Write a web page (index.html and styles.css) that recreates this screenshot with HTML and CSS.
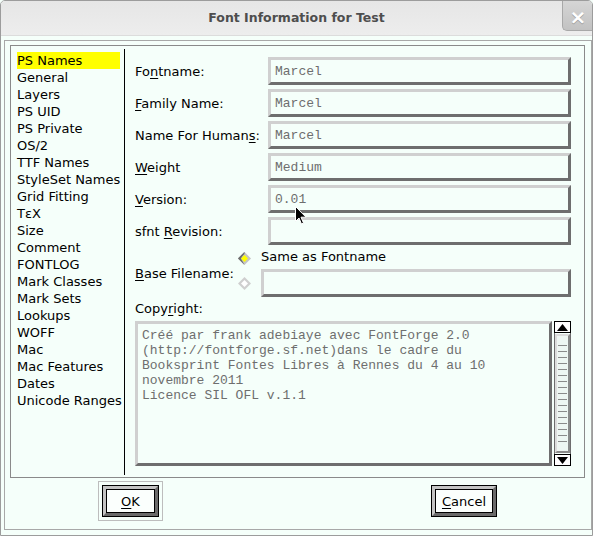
FILE: index.html
```html
<!DOCTYPE html>
<html>
<head>
<meta charset="utf-8">
<link rel="stylesheet" href="styles.css">
</head>
<body>
<div class="window">
  <div class="titlebar">
    <div class="tb-spacer"></div>
    <div class="title">Font Information for Test</div>
    <div class="close">×</div>
  </div>
  <div class="content">
    <div class="frame">
      <div class="group">
        <ul class="list">
          <li class="sel">PS Names</li>
          <li>General</li>
          <li>Layers</li>
          <li>PS UID</li>
          <li>PS Private</li>
          <li>OS/2</li>
          <li>TTF Names</li>
          <li>StyleSet Names</li>
          <li>Grid Fitting</li>
          <li>TεX</li>
          <li>Size</li>
          <li>Comment</li>
          <li>FONTLOG</li>
          <li>Mark Classes</li>
          <li>Mark Sets</li>
          <li>Lookups</li>
          <li>WOFF</li>
          <li>Mac</li>
          <li>Mac Features</li>
          <li>Dates</li>
          <li>Unicode Ranges</li>
        </ul>
        <div class="sep"></div>
        <div class="form">
          <div class="row"><span class="label">Fo<u>n</u>tname:</span><div class="field">Marcel</div></div>
          <div class="row"><span class="label"><u>F</u>amily Name:</span><div class="field">Marcel</div></div>
          <div class="row"><span class="label">Name For Human<u>s</u>:</span><div class="field">Marcel</div></div>
          <div class="row"><span class="label"><u>W</u>eight</span><div class="field">Medium</div></div>
          <div class="row"><span class="label"><u>V</u>ersion:</span><div class="field">0.01</div></div>
          <div class="row"><span class="label">sfnt <u>R</u>evision:</span><div class="field"></div></div>
          <div class="base">
            <span class="base-label"><u>B</u>ase Filename:</span>
            <svg class="diamond d1" width="13" height="13" viewBox="0 0 13 13"><polygon points="6.5,0 13,6.5 6.5,13 0,6.5" fill="#c4c4c4"/><polygon points="6.5,0 0,6.5 6.5,13 3,6.5" fill="#6f6f6f"/><polygon points="6.5,0 0,6.5 2,6.5 6.5,2" fill="#6f6f6f"/><polygon points="6.5,3 10,6.5 6.5,10 3,6.5" fill="#ffff00"/></svg>
            <span class="radio-text">Same as Fontname</span>
            <svg class="diamond d2" width="13" height="13" viewBox="0 0 13 13"><polygon points="6.5,0 13,6.5 6.5,13 0,6.5" fill="#cfcfcf"/><polygon points="6.5,3 10,6.5 6.5,10 3,6.5" fill="#ffffff"/></svg>
            <div class="field base-field"></div>
          </div>
          <div class="copy-label">Copy<u>r</u>ight:</div>
          <div class="copy-row">
            <div class="textarea">Créé par frank adebiaye avec FontForge 2.0
(http://fontforge.sf.net)dans le cadre du
Booksprint Fontes Libres à Rennes du 4 au 10
novembre 2011
Licence SIL OFL v.1.1</div>
            <div class="scrollbar">
              <div class="arrow"><svg width="11" height="7" viewBox="0 0 11 7"><polygon points="5.5,0 11,7 0,7" fill="#000"/></svg></div>
              <div class="track"><div class="thumb"><div class="ridges"></div></div></div>
              <div class="arrow"><svg width="11" height="7" viewBox="0 0 11 7"><polygon points="0,0 11,0 5.5,7" fill="#000"/></svg></div>
            </div>
          </div>
        </div>
      </div>
      <div class="buttons">
        <div class="ring"><div class="btn ok"><div class="face"><div class="btn-label"><u>O</u>K</div></div></div></div>
        <div class="btn cancel"><div class="face"><div class="btn-label"><u>C</u>ancel</div></div></div>
      </div>
    </div>
  </div>
  <svg class="cursor" width="12" height="19" viewBox="0 0 12 19"><path d="M0.5,0.5 L0.5,15.5 L4,12 L6.5,18 L8.5,17 L6,11.2 L11,11.2 Z" fill="#000" stroke="#fff" stroke-width="1"/></svg>
</div>
</body>
</html>
```
FILE: styles.css
```css
* { box-sizing: border-box; }
html, body { margin: 0; padding: 0; background: #f5fffa; }
body { font-family: "DejaVu Sans", sans-serif; font-size: 13px; color: #000; }
u { text-decoration: underline; text-underline-offset: 2px; }

.window {
  position: relative;
  width: 593px;
  height: 536px;
  border: 1px solid #9c9c9c;
  border-radius: 5px 5px 0 0;
  overflow: hidden;
  display: flex;
  flex-direction: column;
  background: #f5fffa;
}

.titlebar {
  height: 35px;
  flex: none;
  display: grid;
  grid-template-columns: 30px 1fr 30px;
  background: linear-gradient(#e6e6e6, #ededed);
  border-bottom: 1px solid #dcdcdc;
}
.title {
  text-align: center;
  font-family: "DejaVu Sans", sans-serif;
  font-weight: bold;
  font-size: 12.5px;
  color: #4e4e4e;
  line-height: 34px;
}
.close {
  height: 31px;
  margin-top: -1px;
  margin-right: -1px;
  background: linear-gradient(#d6d6d6, #c2c2c2);
  border-left: 1px solid #a8a8a8;
  border-bottom: 1px solid #a8a8a8;
  border-bottom-left-radius: 5px;
  color: #fff;
  font-size: 20px;
  font-weight: bold;
  text-align: center;
  line-height: 34px;
  text-shadow: 0 1px 0 #9a9a9a;
}

.content {
  flex: 1;
  padding: 4px 0 5px 3px;
}
.frame {
  height: 100%;
  border: 1px solid #a8a8a8;
  display: flex;
  flex-direction: column;
}
.group {
  margin: 4px 6px 0 5px;
  height: 433px;
  border: 1px solid #8a8a8a;
  display: flex;
}

.list {
  list-style: none;
  margin: 0 0 0 6px;
  padding: 6px 0 0 0;
  width: 103px;
}
.list li {
  height: 17px;
  line-height: 17px;
  white-space: nowrap;
}
.list li.sel { background: #ffff00; }

.sep {
  width: 1px;
  background: #000;
  margin: 3px 0 2px 4px;
}

.form {
  margin-left: 10px;
  width: 436px;
  padding-top: 11px;
  display: flex;
  flex-direction: column;
}
.row {
  height: 28px;
  margin-bottom: 4px;
  display: flex;
  align-items: center;
}
.label {
  width: 133px;
  flex: none;
  white-space: nowrap;
}
.field {
  flex: 1;
  height: 28px;
  border: 3px solid;
  border-color: #d0d0d0 #6e6e6e #6e6e6e #d0d0d0;
  font-family: "Liberation Mono", monospace;
  font-size: 13px;
  color: #6e6e6e;
  padding-left: 4px;
  line-height: 23px;
}

.base {
  display: grid;
  grid-template-columns: 93px 13px 1fr;
  grid-template-rows: 16px 28px;
  column-gap: 10px;
  row-gap: 4px;
  align-items: center;
}
.base-label { grid-row: 1 / 3; grid-column: 1; white-space: nowrap; padding-top: 1px; }
.d1 { grid-row: 1; grid-column: 2; margin-top: 2px; }
.d2 { grid-row: 2; grid-column: 2; }
.radio-text { grid-row: 1; grid-column: 3; line-height: 16px; }
.base-field { grid-row: 2; grid-column: 3; }
.diamond { display: block; }

.copy-label {
  margin-top: 3px;
  height: 17px;
  line-height: 17px;
  margin-bottom: 4px;
}
.copy-row {
  display: flex;
  height: 145px;
  gap: 2px;
}
.textarea {
  width: 417px;
  height: 145px;
  border: 3px solid;
  border-color: #d0d0d0 #6e6e6e #6e6e6e #d0d0d0;
  font-family: "Liberation Mono", monospace;
  font-size: 13px;
  line-height: 15px;
  color: #6e6e6e;
  padding: 4px 0 0 4px;
  white-space: pre;
  overflow: hidden;
}
.scrollbar {
  width: 17px;
  display: flex;
  flex-direction: column;
}
.arrow {
  height: 12px;
  border: 1px solid #000;
  background: #fff;
  display: flex;
  align-items: center;
  justify-content: center;
}
.track {
  flex: 1;
  border-left: 1px solid #6e6e6e;
  border-right: 1px solid #6e6e6e;
  padding: 1px 0;
}
.thumb {
  height: 100%;
  border: 2px solid;
  border-color: #dcdcdc #8a8a8a #8a8a8a #dcdcdc;
  background: #eef6f2;
  padding: 4px 1px;
}
.ridges {
  height: 100%;
  background: repeating-linear-gradient(to bottom, transparent 0, transparent 5px, #8a8a8a 5px, #8a8a8a 6px);
}

.buttons {
  flex: 1;
  display: flex;
  justify-content: space-between;
  align-items: flex-start;
  padding: 3px 94px 0 93px;
}
.ring {
  border: 1px solid #bdbdbd;
  padding: 3px;
}
.btn {
  height: 32px;
  border: 1px solid #000;
}
.ok { width: 57px; }
.cancel { width: 66px; margin-top: 4px; }
.face {
  height: 100%;
  border: 3px solid;
  border-color: #c4c4c4 #6a6a6a #6a6a6a #c4c4c4;
}
.btn-label {
  height: 100%;
  border: 1px solid #000;
  background: #fbfffd;
  display: flex;
  align-items: center;
  justify-content: center;
}

.cursor {
  position: absolute;
  left: 294px;
  top: 205px;
}
```
